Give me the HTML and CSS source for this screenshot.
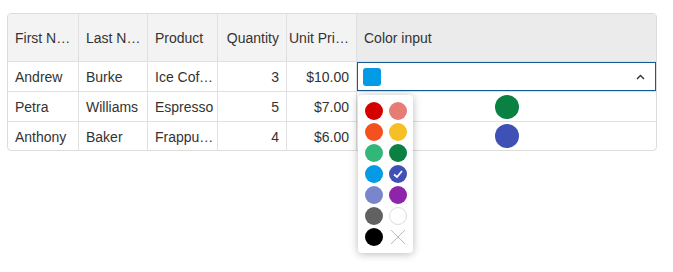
FILE: index.html
```html
<!DOCTYPE html>
<html lang="en">
<head>
  <meta charset="UTF-8" />
  <meta name="viewport" content="width=device-width, initial-scale=1.0"/>
  <title>Color input</title>
  <link rel="stylesheet" href="styles.css">
</head>
<body>
  <div class="grid">
    <div class="cell head">First Name</div>
    <div class="cell head">Last Name</div>
    <div class="cell head">Product</div>
    <div class="cell head num">Quantity</div>
    <div class="cell head num price">Unit Price</div>
    <div class="cell head active last">Color input</div>

    <div class="cell">Andrew</div>
    <div class="cell">Burke</div>
    <div class="cell">Ice Coffee</div>
    <div class="cell num">3</div>
    <div class="cell num">$10.00</div>
    <div class="cell last editing">
      <div class="editor">
        <span class="swatch"></span>
        <svg class="chevron" width="9" height="6" viewBox="0 0 9 6">
          <polyline points="1,5 4.5,1.5 8,5" fill="none" stroke="#333" stroke-width="1.4"/>
        </svg>
      </div>
      <div class="palette">
        <span class="dot" style="background:#d50000"></span>
        <span class="dot" style="background:#e67c73"></span>
        <span class="dot" style="background:#f4511e"></span>
        <span class="dot" style="background:#f6bf26"></span>
        <span class="dot" style="background:#33b679"></span>
        <span class="dot" style="background:#0b8043"></span>
        <span class="dot" style="background:#039be5"></span>
        <span class="dot" style="background:#3f51b5">
          <svg width="18" height="18" viewBox="0 0 18 18">
            <polyline points="5,9.5 8,12 13,6" fill="none" stroke="#fff" stroke-width="1.8"/>
          </svg>
        </span>
        <span class="dot" style="background:#7986cb"></span>
        <span class="dot" style="background:#8e24aa"></span>
        <span class="dot" style="background:#616161"></span>
        <span class="dot white"></span>
        <span class="dot" style="background:#000"></span>
        <span class="dot none">
          <svg width="18" height="18" viewBox="0 0 18 18">
            <path d="M2 2 L16 16 M16 2 L2 16" stroke="#bbb" stroke-width="1"/>
          </svg>
        </span>
      </div>
    </div>

    <div class="cell">Petra</div>
    <div class="cell">Williams</div>
    <div class="cell">Espresso</div>
    <div class="cell num">5</div>
    <div class="cell num">$7.00</div>
    <div class="cell last center"><span class="ball" style="background:#0b8043"></span></div>

    <div class="cell bottom">Anthony</div>
    <div class="cell bottom">Baker</div>
    <div class="cell bottom">Frappuccino</div>
    <div class="cell bottom num">4</div>
    <div class="cell bottom num">$6.00</div>
    <div class="cell bottom last center"><span class="ball" style="background:#3f51b5"></span></div>
  </div>
</body>
</html>
```

FILE: styles.css
```css
html, body {
  height: 100%;
}

body {
  margin: 0;
  padding: 13px 7px;
  box-sizing: border-box;
  min-height: 272px;
  background: #fff;
  font-family: "Liberation Sans", Arial, sans-serif;
  font-size: 14px;
  color: #333;
}

.grid {
  display: grid;
  grid-template-columns: 71px 69px 70px 69px 70px 299px;
  grid-template-rows: 48px 30px 30px 28px;
  width: 648px;
  border: 1px solid #dcdcdc;
  border-radius: 4px;
}

.cell {
  box-sizing: border-box;
  border-right: 1px solid #e0e0e0;
  border-bottom: 1px solid #e0e0e0;
  padding: 1px 3px 0 7px;
  line-height: 29px;
  white-space: nowrap;
  overflow: hidden;
  text-overflow: ellipsis;
  position: relative;
}

.cell.last {
  border-right: none;
}

.cell.bottom {
  border-bottom: none;
  line-height: 28px;
}

.head {
  background: #f3f3f3;
  line-height: 47px;
}

.head.active {
  background: #ebebeb;
  border-top-right-radius: 4px;
}

.head:first-child {
  border-top-left-radius: 4px;
}

.num {
  text-align: right;
  padding-right: 7px;
}

.head.price {
  padding-left: 2px;
  padding-right: 7px;
  text-align: left;
}

.center {
  display: flex;
  align-items: center;
  justify-content: center;
  padding: 0;
}

.ball {
  width: 24px;
  height: 24px;
  border-radius: 50%;
}

.editing {
  padding: 0;
  overflow: visible;
  z-index: 2;
}

.editor {
  box-sizing: border-box;
  width: 100%;
  height: 29px;
  border: 1px solid #135a96;
  display: flex;
  align-items: center;
  justify-content: space-between;
  padding: 0 10px 0 5px;
}

.swatch {
  width: 18px;
  height: 18px;
  border-radius: 3px;
  background: #039be5;
}

.palette {
  position: absolute;
  left: 1px;
  top: 33px;
  background: #fff;
  border-radius: 4px;
  box-shadow: 0 1px 8px rgba(0, 0, 0, 0.28);
  padding: 7px 6px 7px 7px;
  display: grid;
  grid-template-columns: 18px 18px;
  column-gap: 6px;
  row-gap: 3px;
}

.dot {
  width: 18px;
  height: 18px;
  border-radius: 50%;
  display: block;
}

.dot svg {
  display: block;
}

.dot.white {
  box-sizing: border-box;
  border: 1px solid #ddd;
  background: #fff;
}

.dot.none {
  border-radius: 0;
}
```
